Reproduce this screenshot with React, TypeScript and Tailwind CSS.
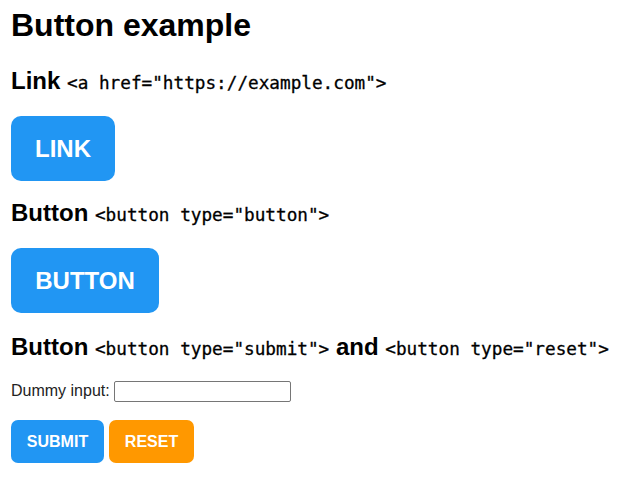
export default function App() {
  const code =
    "font-['DejaVu_Sans_Mono',monospace] text-[17.7px] font-normal leading-none [-webkit-text-stroke:0.3px_black]";

  return (
    <div className="min-h-[477px] bg-white pl-[11px] pt-[7px] font-['Liberation_Sans',Arial,sans-serif] text-black">
      <h1 className="text-[32px] font-bold leading-[37px]">Button example</h1>

      <h2 className="mt-[23px] text-[24px] font-bold leading-[28px]">
        Link <code className={code}>&lt;a href="https://example.com"&gt;</code>
      </h2>
      <a
        href="#"
        className="mt-[21px] flex h-[65px] w-[104px] items-center justify-center rounded-[10px] bg-[#2196F3] text-[24px] font-bold text-white"
      >
        LINK
      </a>

      <h2 className="mt-[18px] text-[24px] font-bold leading-[28px]">
        Button <code className={code}>&lt;button type="button"&gt;</code>
      </h2>
      <button
        type="button"
        className="mt-[21px] flex h-[65px] w-[148px] items-center justify-center rounded-[10px] bg-[#2196F3] text-[24px] font-bold text-white"
      >
        BUTTON
      </button>

      <h2 className="mt-[20px] text-[24px] font-bold leading-[28px]">
        Button <code className={code}>&lt;button type="submit"&gt;</code> and{" "}
        <code className={code}>&lt;button type="reset"&gt;</code>
      </h2>

      <form className="mt-[20px]" onSubmit={(e) => e.preventDefault()}>
        <div className="flex items-start gap-[4px]">
          <label className="mt-[1px] text-[16px] leading-[18px] text-[#222]">Dummy input:</label>
          <input type="text" className="h-[21px] w-[177px] rounded-[2px] border border-[#767676] bg-white px-[2px] text-[13px]" />
        </div>
        <div className="mt-[18px] flex gap-[5px]">
          <button
            type="submit"
            className="flex h-[43px] w-[93px] items-center justify-center rounded-[7px] bg-[#2196F3] text-[16px] font-bold text-white"
          >
            SUBMIT
          </button>
          <button
            type="reset"
            className="flex h-[43px] w-[85px] items-center justify-center rounded-[7px] bg-[#FF9800] text-[16px] font-bold text-white"
          >
            RESET
          </button>
        </div>
      </form>
    </div>
  );
}
